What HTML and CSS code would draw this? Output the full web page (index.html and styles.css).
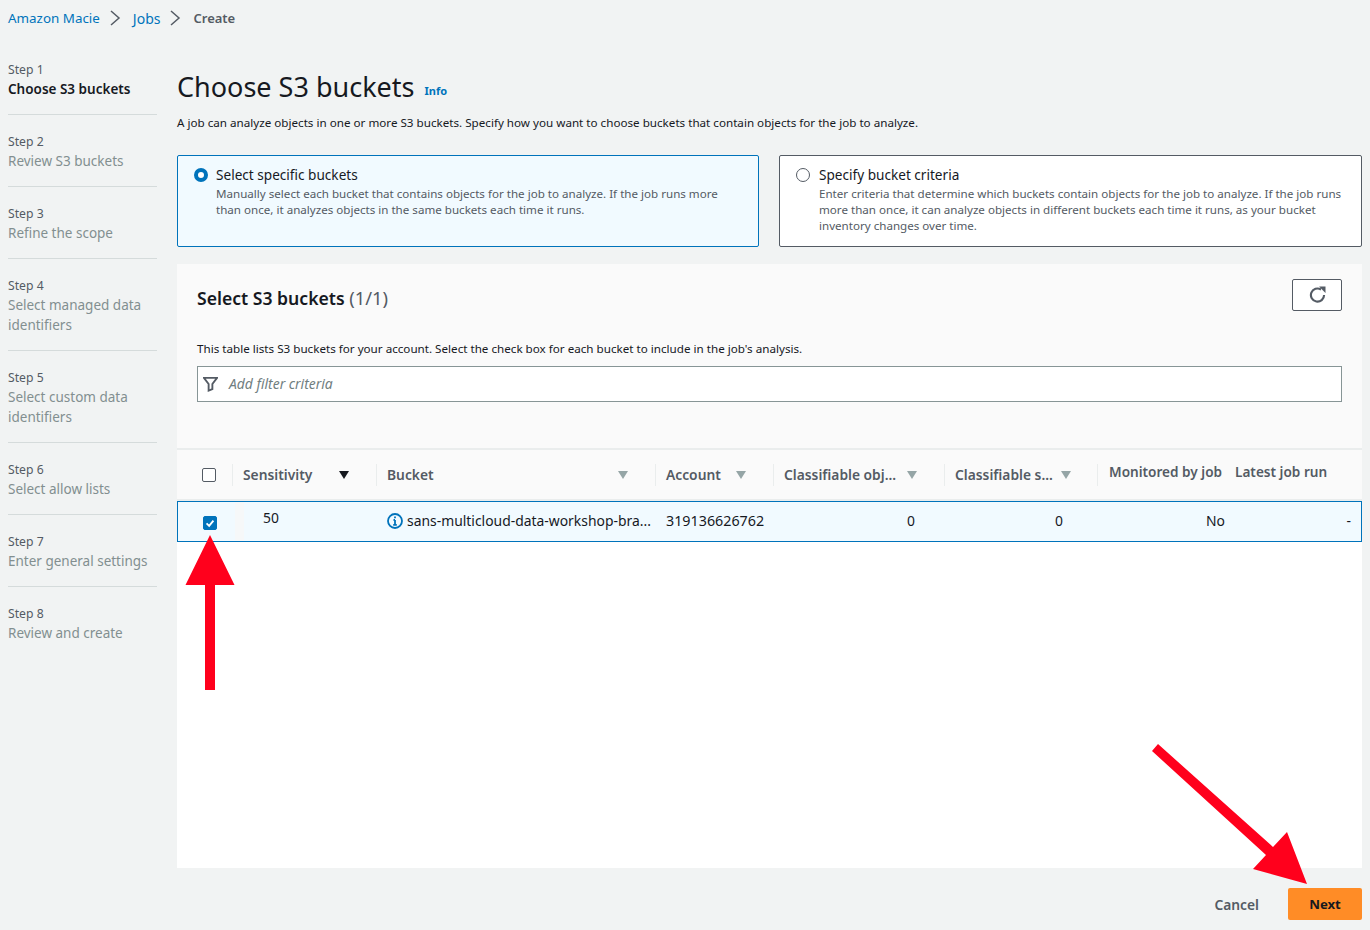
FILE: index.html
```html
<!DOCTYPE html>
<html lang="en">
<head>
    <meta charset="UTF-8">
    <title>Choose S3 buckets</title>
    <link rel="stylesheet" href="styles.css">
</head>
<body>
    <nav class="crumbs">
        <a href="#">Amazon Macie</a>
        <svg class="crumb-sep" viewBox="0 0 12 16"><path d="M2 1l8 7-8 7"/></svg>
        <a class="crumb-short" href="#">Jobs</a>
        <svg class="crumb-sep" viewBox="0 0 12 16"><path d="M2 1l8 7-8 7"/></svg>
        <span class="crumb-current">Create</span>
    </nav>

    <div class="wizard">
        <!-- Steps -->
        <ul class="steps">
            <li class="step active"><small>Step 1</small><span>Choose S3 buckets</span></li>
            <li class="step"><small>Step 2</small><span>Review S3 buckets</span></li>
            <li class="step"><small>Step 3</small><span>Refine the scope</span></li>
            <li class="step"><small>Step 4</small><span>Select managed data identifiers</span></li>
            <li class="step"><small>Step 5</small><span>Select custom data identifiers</span></li>
            <li class="step"><small>Step 6</small><span>Select allow lists</span></li>
            <li class="step"><small>Step 7</small><span>Enter general settings</span></li>
            <li class="step last"><small>Step 8</small><span>Review and create</span></li>
        </ul>

        <main class="content">
            <div class="title-row">
                <h1>Choose S3 buckets</h1>
                <a class="info" href="#">Info</a>
            </div>
            <p class="intro">A job can analyze objects in one or more S3 buckets. Specify how you want to choose buckets that contain objects for the job to analyze.</p>

            <div class="tiles">
                <div class="tile selected">
                    <span class="radio on"></span>
                    <div>
                        <div class="tile-title">Select specific buckets</div>
                        <p>Manually select each bucket that contains objects for the job to analyze. If the job runs more than once, it analyzes objects in the same buckets each time it runs.</p>
                    </div>
                </div>
                <div class="tile">
                    <span class="radio"></span>
                    <div>
                        <div class="tile-title">Specify bucket criteria</div>
                        <p>Enter criteria that determine which buckets contain objects for the job to analyze. If the job runs more than once, it can analyze objects in different buckets each time it runs, as your bucket inventory changes over time.</p>
                    </div>
                </div>
            </div>

            <section class="panel">
                <div class="panel-head">
                    <div class="panel-top">
                        <h2>Select S3 buckets <span>(1/1)</span></h2>
                        <button class="refresh">
                            <svg viewBox="0 0 16 16"><path d="M14.200 8.500A6.200 6.200 0 1 1 11.300 3.300"/><path class="fill" d="M9.500 .5h6v6z"/></svg>
                        </button>
                    </div>
                    <p class="panel-desc">This table lists S3 buckets for your account. Select the check box for each bucket to include in the job's analysis.</p>
                    <div class="filter">
                        <svg viewBox="0 0 16 16"><path d="M1 1.500h14L10 8v5.500l-4 1.500V8z"/></svg>
                        <span>Add filter criteria</span>
                    </div>
                </div>

                <div class="table-head">
                    <div class="th th-check"><span class="check"></span></div>
                    <div class="th sep"><span>Sensitivity</span><i class="sort dark"></i></div>
                    <div class="th sep"><span>Bucket</span><i class="sort"></i></div>
                    <div class="th sep"><span>Account</span><i class="sort"></i></div>
                    <div class="th sep"><span>Classifiable obj...</span><i class="sort"></i></div>
                    <div class="th sep"><span>Classifiable s...</span><i class="sort"></i></div>
                    <div class="th sep raised"><span>Monitored by job</span></div>
                    <div class="th raised"><span>Latest job run</span></div>
                </div>
                <div class="table-row">
                    <div class="td td-check"><span class="check on"><svg viewBox="0 0 14 14"><path d="M3 7.500l3 2.800 5-6"/></svg></span></div>
                    <div class="td td-sens"><span>50</span></div>
                    <div class="td td-bucket">
                        <svg class="info-icon" viewBox="0 0 16 16"><circle cx="8" cy="8" r="7"/><path d="M8 7v4.500M6.200 11.800h3.600M6.500 7H8"/><path d="M8 3.500v1.800"/></svg>
                        <span>sans-multicloud-data-workshop-bra...</span>
                    </div>
                    <div class="td td-account">319136626762</div>
                    <div class="td num num-obj">0</div>
                    <div class="td num num-size">0</div>
                    <div class="td num num-mon">No</div>
                    <div class="td num num-last">-</div>
                </div>
            </section>

            <div class="actions">
                <a class="cancel" href="#">Cancel</a>
                <button class="next">Next</button>
            </div>
        </main>
    </div>

    <!-- Flechas encima de la captura -->
    <svg class="arrow arrow-up" viewBox="0 0 50 155"><path d="M25 0L49.500 50H30V155H20V50H0.500z"/></svg>
    <svg class="arrow arrow-next" viewBox="0 0 160 150"><path d="M8 4L123 107 137 92 157 144 103 129 116 115 2 11z"/></svg>
</body>
</html>
```

FILE: styles.css
```css
* {
    box-sizing: border-box;
}
html, body {
    height: 930px;
    overflow: hidden;
}
body {
    margin: 0;
    background-color: #f1f3f3;
    color: #16191f;
    font-family: "Noto Sans", "Open Sans", sans-serif;
    font-size: 13px;
    position: relative;
}
a {
    text-decoration: none;
    color: #0073bb;
}
p {
    margin: 0;
}

/* Breadcrumb */
.crumbs {
    height: 36px;
    padding: 0 0 0 8px;
    display: flex;
    align-items: center;
    font-size: 13.4px;
}
.crumb-short {
    font-size: 14px;
}
.crumb-sep {
    width: 12px;
    height: 16px;
    margin: 0 12px 0 9px;
    fill: none;
    stroke: #545b64;
    stroke-width: 1.5;
}
.crumb-current {
    color: #545b64;
    font-weight: 600;
    font-size: 13px;
}

.wizard {
    display: flex;
    padding-left: 8px;
}

/* Steps */
.steps {
    list-style: none;
    margin: 23px 20px 0 0;
    padding: 0;
    width: 149px;
    flex: none;
}
.step {
    border-bottom: 1px solid #d5dbdb;
    padding-bottom: 15px;
    margin-bottom: 16px;
    font-size: 13.5px;
    line-height: 20px;
}
.step.last {
    border-bottom: none;
}
.step small {
    display: block;
    height: 20px;
    line-height: 21px;
    font-size: 12.2px;
    color: #545b64;
}
.step span {
    display: block;
    color: #828f90;
}
.step.active span {
    color: #16191f;
    font-weight: 600;
}

/* Main */
.content {
    width: 1185px;
    flex: none;
}
.title-row {
    display: flex;
    align-items: flex-end;
    height: 36px;
    margin-top: 33px;
}
h1 {
    margin: 0;
    font-size: 27px;
    font-weight: 400;
    line-height: 36px;
}
.info {
    font-size: 11px;
    font-weight: 700;
    margin: 0 0 7px 10px;
}
.intro {
    margin-top: 10px;
    font-size: 11.65px;
    line-height: 16px;
}

.tiles {
    display: grid;
    grid-template-columns: 582px 583px;
    gap: 20px;
    margin-top: 24px;
}
.tile {
    height: 92px;
    border: 1px solid #545b64;
    border-radius: 2px;
    background: #fff;
    display: flex;
    gap: 8px;
    padding: 11px 15px;
}
.tile + .tile {
    gap: 9px;
}
.tile.selected {
    border-color: #0073bb;
    background: #f1faff;
}
.tile-title {
    font-size: 13.6px;
    line-height: 16px;
    margin-bottom: 3px;
}
.tile p {
    font-size: 11.6px;
    line-height: 16px;
    color: #545b64;
}
.radio {
    flex: none;
    width: 14px;
    height: 14px;
    margin: 1px 0 0 1px;
    border: 1px solid #545b64;
    border-radius: 50%;
    background: #fff;
}
.radio.on {
    border: 4px solid #0073bb;
}

/* Panel */
.panel {
    margin-top: 17px;
    background: #fff;
    height: 604px;
}
.panel-head {
    background: #fafafa;
    height: 184px;
    padding: 15px 20px 0;
}
.panel-top {
    display: flex;
    justify-content: space-between;
    align-items: flex-start;
}
h2 {
    margin: 7px 0 0;
    font-size: 17.6px;
    font-weight: 600;
    line-height: 24px;
}
h2 span {
    font-size: 18.4px;
    font-weight: 400;
    color: #545b64;
}
.refresh {
    width: 50px;
    height: 32px;
    padding: 0 0 1px;
    background: #fff;
    border: 1px solid #545b64;
    border-radius: 2px;
    display: flex;
    align-items: center;
    justify-content: center;
}
.refresh svg {
    width: 17px;
    height: 17px;
    fill: none;
    stroke: #545b64;
    stroke-width: 2;
}
.refresh .fill {
    fill: #545b64;
    stroke: none;
}
.panel-desc {
    margin-top: 30px;
    font-size: 11.65px;
    line-height: 16px;
}
.filter {
    margin-top: 9px;
    height: 36px;
    background: #fff;
    border: 1px solid #879596;
    display: flex;
    align-items: center;
    gap: 11px;
    padding-left: 5px;
}
.filter svg {
    width: 15px;
    height: 16px;
    fill: none;
    stroke: #545b64;
    stroke-width: 2;
}
.filter span {
    font-size: 13.9px;
    font-style: italic;
    color: #707e7f;
    margin-bottom: 2px;
}

/* Table */
.table-head, .table-row {
    display: grid;
    grid-template-columns: 55px 144px 279px 118px 171px 153px 136px 1fr;
}
.table-head {
    height: 53px;
    background: #fafafa;
    border-top: 2px solid #eaeded;
    border-bottom: 2px solid #eaeded;
}
.th {
    display: flex;
    align-items: center;
    padding: 0 10px 0 11px;
    font-size: 13.8px;
    font-weight: 600;
    color: #545b64;
    white-space: nowrap;
    position: relative;
}
.th.sep::before {
    content: "";
    position: absolute;
    left: 0;
    top: 14px;
    height: 22px;
    width: 1px;
    background: #eaeded;
}
.th.raised {
    align-items: flex-start;
    font-size: 13.6px;
    padding: 12px 12px 0;
    line-height: 19px;
}
.th.raised + .th.raised {
    padding-left: 2px;
}
.th-check {
    padding-left: 25px;
}
.sort {
    margin-left: auto;
    margin-right: 17px;
    width: 0;
    height: 0;
    border-left: 5.5px solid transparent;
    border-right: 5.5px solid transparent;
    border-top: 8px solid #95a5a6;
}
.sort.dark {
    border-top-color: #16191f;
}
.table-head .th:nth-child(4) .sort {
    margin-left: 15px;
}
.table-head .th:nth-child(5) .sort {
    margin-left: 11px;
}
.table-head .th:nth-child(6) .sort {
    margin-left: 8px;
}
.check {
    display: block;
    width: 14px;
    height: 14px;
    border: 1px solid #545b64;
    border-radius: 2px;
    background: #fff;
}
.check.on {
    background: #0073bb;
    border-color: #0073bb;
}
.check svg {
    display: block;
    width: 12px;
    height: 12px;
    fill: none;
    stroke: #fff;
    stroke-width: 2.2;
}
.table-row {
    height: 41px;
    background: #f1faff;
    border: 1px solid #0073bb;
    font-size: 13.9px;
}
.td {
    display: flex;
    align-items: center;
    white-space: nowrap;
    padding-bottom: 2px;
}
.td-check {
    padding: 3px 0 0 25px;
}
.td-sens {
    padding: 0 0 8px 19px;
    border-left: 9px solid #f6f8f9;
    margin-left: 2px;
    margin-right: -2px;
}
.td-bucket {
    padding-left: 10px;
    gap: 4px;
}
.td-account {
    padding-left: 10px;
    font-size: 14.3px;
}
.info-icon {
    flex: none;
    width: 16px;
    height: 16px;
    fill: none;
    stroke: #0073bb;
    stroke-width: 1.8;
}
.num {
    justify-content: flex-end;
}
.num-obj {
    padding-right: 30px;
}
.num-size {
    padding-right: 35px;
}
.num-mon {
    padding-right: 9px;
}
.num-last {
    padding-right: 10px;
}

/* Footer */
.actions {
    height: 62px;
    display: flex;
    align-items: center;
    justify-content: flex-end;
    gap: 29px;
    padding-top: 10px;
}
.cancel {
    color: #545b64;
    font-weight: 600;
    font-size: 13.8px;
}
.next {
    width: 74px;
    height: 32px;
    background: #ff8c26;
    border: none;
    border-radius: 2px;
    color: #16191f;
    font-family: inherit;
    font-weight: 700;
    font-size: 13.2px;
}

/* Flechas */
.arrow {
    position: absolute;
    fill: #ff001c;
}
.arrow-up {
    left: 185px;
    top: 535px;
    width: 50px;
    height: 155px;
}
.arrow-next {
    left: 1150px;
    top: 740px;
    width: 160px;
    height: 150px;
}
```
